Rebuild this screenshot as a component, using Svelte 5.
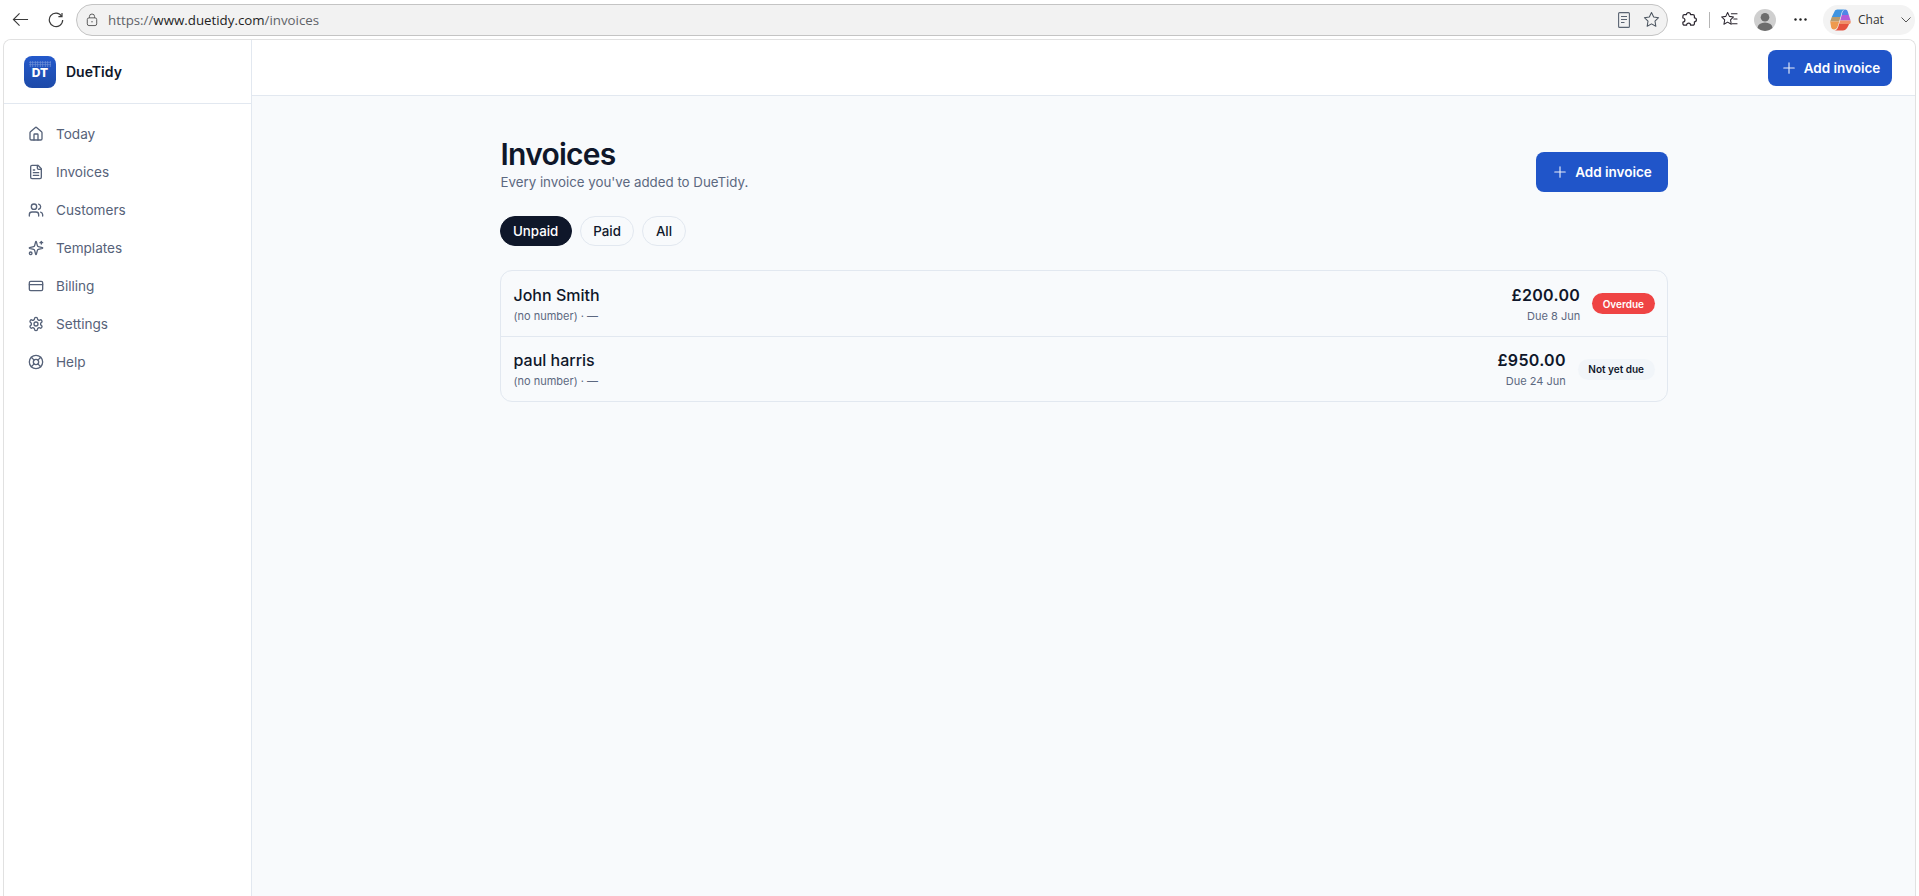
<script lang="ts">
  const circle = (cx: number, cy: number, r: number) =>
    `M${cx - r} ${cy}a${r} ${r} 0 1 0 ${r * 2} 0a${r} ${r} 0 1 0 ${-r * 2} 0`;

  const NAV = [
    {
      label: 'Today',
      paths: [
        'M15 21v-8a1 1 0 0 0-1-1h-4a1 1 0 0 0-1 1v8',
        'M3 10a2 2 0 0 1 .709-1.528l7-5.999a2 2 0 0 1 2.582 0l7 5.999A2 2 0 0 1 21 10v9a2 2 0 0 1-2 2H5a2 2 0 0 1-2-2z'
      ]
    },
    {
      label: 'Invoices',
      paths: [
        'M15 2H6a2 2 0 0 0-2 2v16a2 2 0 0 0 2 2h12a2 2 0 0 0 2-2V7Z',
        'M14 2v4a2 2 0 0 0 2 2h4',
        'M10 9H8',
        'M16 13H8',
        'M16 17H8'
      ]
    },
    {
      label: 'Customers',
      paths: [
        'M16 21v-2a4 4 0 0 0-4-4H6a4 4 0 0 0-4 4v2',
        circle(9, 7, 4),
        'M22 21v-2a4 4 0 0 0-3-3.87',
        'M16 3.13a4 4 0 0 1 0 7.75'
      ]
    },
    {
      label: 'Templates',
      paths: [
        'M9.937 15.5A2 2 0 0 0 8.5 14.063l-6.135-1.582a.5.5 0 0 1 0-.962L8.5 9.936A2 2 0 0 0 9.937 8.5l1.582-6.135a.5.5 0 0 1 .963 0L14.063 8.5A2 2 0 0 0 15.5 9.937l6.135 1.581a.5.5 0 0 1 0 .964L15.5 14.063a2 2 0 0 0-1.437 1.437l-1.582 6.135a.5.5 0 0 1-.963 0z',
        'M20 2v4',
        'M22 4h-4',
        circle(4, 20, 2)
      ]
    },
    {
      label: 'Billing',
      paths: ['M4 5h16a2 2 0 0 1 2 2v10a2 2 0 0 1-2 2H4a2 2 0 0 1-2-2V7a2 2 0 0 1 2-2z', 'M2 10h20']
    },
    {
      label: 'Settings',
      paths: [
        'M12.22 2h-.44a2 2 0 0 0-2 2v.18a2 2 0 0 1-1 1.73l-.43.25a2 2 0 0 1-2 0l-.15-.08a2 2 0 0 0-2.73.73l-.22.38a2 2 0 0 0 .73 2.73l.15.1a2 2 0 0 1 1 1.72v.51a2 2 0 0 1-1 1.74l-.15.09a2 2 0 0 0-.73 2.73l.22.38a2 2 0 0 0 2.73.73l.15-.08a2 2 0 0 1 2 0l.43.25a2 2 0 0 1 1 1.73V20a2 2 0 0 0 2 2h.44a2 2 0 0 0 2-2v-.18a2 2 0 0 1 1-1.73l.43-.25a2 2 0 0 1 2 0l.15.08a2 2 0 0 0 2.73-.73l.22-.39a2 2 0 0 0-.73-2.73l-.15-.08a2 2 0 0 1-1-1.74v-.5a2 2 0 0 1 1-1.74l.15-.09a2 2 0 0 0 .73-2.73l-.22-.38a2 2 0 0 0-2.73-.73l-.15.08a2 2 0 0 1-2 0l-.43-.25a2 2 0 0 1-1-1.73V4a2 2 0 0 0-2-2z',
        circle(12, 12, 3)
      ]
    },
    {
      label: 'Help',
      paths: [
        circle(12, 12, 10),
        'm4.93 4.93 4.24 4.24',
        'm14.83 9.17 4.24-4.24',
        'm14.83 14.83 4.24 4.24',
        'm9.17 14.83-4.24 4.24',
        circle(12, 12, 4)
      ]
    }
  ];

  const INVOICES = [
    { name: 'John Smith', amount: '£200.00', due: 'Due 8 Jun', status: 'Overdue', overdue: true },
    { name: 'paul harris', amount: '£950.00', due: 'Due 24 Jun', status: 'Not yet due', overdue: false }
  ];

  const FILTERS = ['Unpaid', 'Paid', 'All'];
</script>

{#snippet plus()}
  <svg class="plus" viewBox="0 0 24 24" fill="none" stroke="currentColor" stroke-width="1.5" stroke-linecap="round">
    <path d="M5 12h14M12 5v14" />
  </svg>
{/snippet}

<div class="window">
  <div class="chrome">
    <svg class="c-back" viewBox="0 0 18 18" fill="none" stroke="#3b3b3b" stroke-width="1.2">
      <path d="M17 9H1.500M8 2.500 1.500 9 8 15.500" />
    </svg>
    <svg class="c-reload" viewBox="0 0 16 16" fill="none" stroke="#3b3b3b" stroke-width="1.2">
      <path d="M13.600 4.200A6.700 6.700 0 1 0 14.700 8" />
      <path d="M14 1v3.600h-3.600" />
    </svg>
    <div class="urlbar">
      <svg class="c-lock" viewBox="0 0 14 16" fill="none" stroke="#555" stroke-width="1.1">
        <rect x="1.500" y="5.500" width="11" height="9" rx="2" />
        <path d="M4 5.500V4a3 3 0 0 1 6 0v1.500" />
        <circle cx="7" cy="10" r=".8" fill="#555" stroke="none" />
      </svg>
      <span class="url"><span class="dim">https://</span>www.duetidy.com<span class="dim">/invoices</span></span>
      <svg class="c-reader" viewBox="0 0 12 16" fill="none" stroke="#5a6472" stroke-width="1.1">
        <rect x=".6" y=".6" width="10.800" height="14.800" rx="1" />
        <path d="M3 4.500h6M3 7.500h6M3 10.500h3.500" />
      </svg>
      <svg class="c-star" viewBox="0 0 18 18" fill="none" stroke="#4c5560" stroke-width="1.1" stroke-linejoin="round">
        <path d="m9 1.500 2.300 4.900 5.200.7-3.800 3.700.9 5.400L9 13.600l-4.600 2.600.9-5.400-3.800-3.700 5.200-.7z" />
      </svg>
    </div>
    <svg class="c-puzzle" viewBox="0 0 16 16" fill="none" stroke="#2c2730" stroke-width="1.2" stroke-linejoin="round">
      <path d="M5.500 2.600a2 2 0 0 1 4 0h2.400a1.500 1.500 0 0 1 1.500 1.500v1.700a2 2 0 0 1 0 4v1.900a1.500 1.500 0 0 1-1.500 1.500H9.600a2 2 0 0 0-4 0H3.400a1.500 1.500 0 0 1-1.500-1.500V10a2 2 0 0 0 0-4V4.100a1.500 1.500 0 0 1 1.500-1.500z" />
    </svg>
    <span class="c-sep"></span>
    <svg class="c-favs" viewBox="0 0 18 18" fill="none" stroke="#2c2730" stroke-width="1.1" stroke-linejoin="round">
      <path d="m7 1.500 1.900 4.200 4.400.6-3.200 3.100.8 4.600L7 11.800l-3.900 2.200.8-4.600L.7 6.300l4.400-.6z" />
      <path d="M11 3h6M13.500 8.500H17M12 13.500h5" stroke-linecap="round" />
    </svg>
    <svg class="c-avatar" viewBox="0 0 22 22">
      <circle cx="11" cy="11" r="11" fill="#cfcfcf" />
      <circle cx="11" cy="8.300" r="4.300" fill="#6d6d6d" />
      <path d="M3.500 19a7.500 5.500 0 0 1 15 0 11 11 0 0 1-15 0z" fill="#6d6d6d" />
    </svg>
    <svg class="c-dots" viewBox="0 0 13 3" fill="#222">
      <circle cx="1.500" cy="1.500" r="1.200" /><circle cx="6.500" cy="1.500" r="1.200" /><circle cx="11.500" cy="1.500" r="1.200" />
    </svg>
    <div class="chat">
      <svg class="c-copilot" viewBox="0 0 22 22">
        <path d="M6 1.500C6.800.7 8 .5 9 .5h7c-2 .4-3 1.800-3.500 3.500L11.500 8H2.800z" fill="#3f94e0" />
        <path d="M2.800 8h8.700l-1.300 4.500H1.200z" fill="#b89a6c" />
        <path d="M1.200 12.500h9l-1.300 4.300c-.7 2.500-2 3.700-3.900 3.700-1.500 0-2.300-.8-2.800-2z" fill="#ee9a4e" />
        <path d="M16 .5c1.500 0 2.300.8 2.800 2.200l1 3.300h-7.100l.3-1.500c.5-2 1.700-3.700 3-4z" fill="#4f86e6" />
        <path d="M12.700 6h7.100l1.700 5.500H11.200z" fill="#b35bd6" />
        <path d="M11.200 11.500h10.300c.6 1.800.1 3.500-1.500 3.500H10z" fill="#f0906a" />
        <path d="M10 15h10c-1.200 3-3 6.500-6 6.500H5.500c2.300 0 3.600-2.300 4.500-6.500z" fill="#e5533f" />
      </svg>
      <span>Chat</span>
      <svg class="c-chev" viewBox="0 0 10 6" fill="none" stroke="#555" stroke-width="1">
        <path d="m.5.5 4.500 4.500L9.500.5" />
      </svg>
    </div>
  </div>

  <div class="app">
    <aside class="sidebar">
      <div class="brand">
        <div class="logo"><span>DT</span></div>
        <span class="brand-name">DueTidy</span>
      </div>
      <nav class="nav">
        {#each NAV as item}
          <div class="nav-item">
            <svg viewBox="0 0 24 24" fill="none" stroke="currentColor" stroke-width="2" stroke-linecap="round" stroke-linejoin="round">
              {#each item.paths as d}
                <path {d} />
              {/each}
            </svg>
            <span>{item.label}</span>
          </div>
        {/each}
      </nav>
    </aside>

    <div class="main">
      <header class="topbar">
        <button class="btn btn-sm">{@render plus()}Add invoice</button>
      </header>
      <main class="content">
        <div class="page-head">
          <div class="titles">
            <h1>Invoices</h1>
            <p>Every invoice you've added to DueTidy.</p>
          </div>
          <button class="btn">{@render plus()}Add invoice</button>
        </div>

        <div class="filters">
          {#each FILTERS as f, i}
            <span class="pill" class:active={i === 0}>{f}</span>
          {/each}
        </div>

        <div class="card">
          {#each INVOICES as inv}
            <div class="row">
              <div class="who">
                <div class="name">{inv.name}</div>
                <div class="meta">(no number) · —</div>
              </div>
              <div class="money">
                <div class="amount">{inv.amount}</div>
                <div class="due">{inv.due}</div>
              </div>
              <span class="badge" class:overdue={inv.overdue}>{inv.status}</span>
            </div>
          {/each}
        </div>
      </main>
    </div>
  </div>
</div>

<style>
  :global(body) {
    margin: 0;
    background: #fff;
    font-family: Inter, 'Liberation Sans', sans-serif;
    overflow: hidden;
  }
  .window {
    width: 1919px;
    height: 896px;
    display: flex;
    flex-direction: column;
    background: #fff;
  }

  /* ---------- browser bar ---------- */
  .chrome {
    height: 39px;
    flex: none;
    display: flex;
    align-items: center;
    box-sizing: border-box;
    padding-left: 12px;
  }
  .c-back { width: 17px; height: 17px; flex: none; }
  .c-reload { width: 16px; height: 16px; margin-left: 19px; flex: none; }
  .urlbar {
    width: 1592px;
    height: 32px;
    margin-left: 12px;
    box-sizing: border-box;
    border: 1px solid #c4c4c4;
    border-radius: 16px;
    background: #f2f2f2;
    display: flex;
    align-items: center;
    padding-left: 9px;
    flex: none;
  }
  .c-lock { width: 12px; height: 14px; flex: none; }
  .url {
    margin-left: 10px;
    font-family: 'Open Sans', sans-serif;
    font-size: 13.3px;
    color: #1f1f1f;
    flex: 1;
  }
  .dim { color: #5f6368; }
  .c-reader { width: 12px; height: 16px; flex: none; }
  .c-star { width: 17px; height: 17px; margin-left: 13px; margin-right: 7px; flex: none; }
  .c-puzzle { width: 16px; height: 16px; margin-left: 13px; flex: none; }
  .c-sep { width: 1px; height: 16px; background: #b5b5b5; margin-left: 12px; flex: none; }
  .c-favs { width: 17px; height: 17px; margin-left: 11px; flex: none; }
  .c-avatar { width: 22px; height: 22px; margin-left: 16px; flex: none; }
  .c-dots { width: 13px; height: 3px; margin-left: 18px; flex: none; }
  .chat {
    width: 92px;
    height: 30px;
    margin-left: 16px;
    box-sizing: border-box;
    padding-left: 6px;
    border-radius: 15px;
    background: #f3f3f3;
    display: flex;
    align-items: center;
    font-family: 'Open Sans', sans-serif;
    font-size: 12px;
    color: #333;
    flex: none;
  }
  .c-copilot { width: 22px; height: 22px; margin-right: 7px; flex: none; }
  .c-chev { width: 10px; height: 6px; margin-left: 17px; flex: none; }

  /* ---------- app frame ---------- */
  .app {
    flex: 1;
    min-height: 0;
    display: flex;
    margin-left: 3px;
    margin-right: 3px;
    border: 1px solid #e1e1e1;
    border-bottom: none;
    border-radius: 8px 8px 0 0;
    overflow: hidden;
    background: #f8fafc;
  }
  .sidebar {
    width: 248px;
    flex: none;
    box-sizing: border-box;
    background: #fff;
    border-right: 1px solid #e2e8f0;
  }
  .brand {
    height: 64px;
    box-sizing: border-box;
    border-bottom: 1px solid #e2e8f0;
    display: flex;
    align-items: center;
    padding-left: 20px;
    gap: 10px;
  }
  .logo {
    width: 32px;
    height: 32px;
    border-radius: 8px;
    background: linear-gradient(180deg, #2459cb, #1d4aa8);
    color: #fff;
    font-weight: 800;
    font-size: 12px;
    display: flex;
    align-items: center;
    justify-content: center;
    position: relative;
  }
  .logo span { margin-top: 2px; }
  .logo::before {
    content: '';
    position: absolute;
    left: 5px;
    right: 5px;
    top: 5px;
    height: 6px;
    background-image: radial-gradient(circle, rgba(255, 255, 255, 0.35) 0.8px, transparent 1px);
    background-size: 2.5px 2.5px;
  }
  .brand-name {
    font-size: 14px;
    font-weight: 600;
    color: #0f172a;
  }
  .nav {
    padding-top: 11px;
    display: flex;
    flex-direction: column;
  }
  .nav-item {
    height: 38px;
    display: flex;
    align-items: center;
    padding-left: 24px;
    gap: 12px;
    font-size: 13.6px;
    color: #566279;
  }
  .nav-item svg { width: 16px; height: 16px; flex: none; }

  .main {
    flex: 1;
    min-width: 0;
    display: flex;
    flex-direction: column;
  }
  .topbar {
    height: 56px;
    flex: none;
    box-sizing: border-box;
    background: #fff;
    border-bottom: 1px solid #e2e8f0;
    display: flex;
    align-items: center;
    justify-content: flex-end;
    padding-right: 23px;
  }
  .btn {
    display: inline-flex;
    align-items: center;
    justify-content: center;
    gap: 6px;
    border: none;
    background: #2055c9;
    color: #fff;
    font: 600 13.5px Inter, sans-serif;
    width: 132px;
    height: 40px;
    border-radius: 8px;
    padding: 0;
    flex: none;
  }
  .btn-sm { width: 124px; height: 36px; }
  .plus { width: 18px; height: 18px; flex: none; opacity: 0.9; }

  .content {
    width: 1168px;
    margin: 0 auto;
    padding-top: 43px;
  }
  .page-head {
    display: flex;
    justify-content: space-between;
    align-items: flex-start;
    height: 57px;
  }
  .page-head .btn { margin-top: 13px; }
  .titles { padding-left: 1px; }
  h1 {
    margin: 0;
    font-size: 30px;
    line-height: 30px;
    font-weight: 600;
    color: #0f172a;
    letter-spacing: -0.75px;
  }
  .page-head p {
    margin: 4px 0 0;
    font-size: 13.3px;
    line-height: 18px;
    color: #5c6880;
  }
  .filters {
    display: flex;
    gap: 8px;
    margin-top: 20px;
  }
  .pill {
    height: 30px;
    box-sizing: border-box;
    display: flex;
    align-items: center;
    padding: 0 12.500px;
    border: 1px solid #e2e8f0;
    border-radius: 15px;
    font-size: 13.3px;
    font-weight: 450;
    color: #0f172a;
  }
  .pill.active {
    background: #0f172a;
    border-color: #0f172a;
    color: #fff;
  }
  .card {
    margin-top: 24px;
    border: 1px solid #e2e8f0;
    border-radius: 12px;
  }
  .row {
    height: 65px;
    box-sizing: border-box;
    display: flex;
    align-items: center;
    padding: 0 12px 0 13px;
  }
  .row + .row { border-top: 1px solid #e2e8f0; }
  .who { flex: 1; }
  .name {
    font-size: 16px;
    font-weight: 450;
    line-height: 20px;
    color: #0f172a;
  }
  .meta {
    margin-top: 4px;
    font-size: 11px;
    line-height: 14px;
    color: #5c6880;
  }
  .money { text-align: right; margin-right: 12px; }
  .amount {
    font-size: 16px;
    font-weight: 600;
    line-height: 20px;
    color: #0f172a;
    letter-spacing: 0.3px;
  }
  .due {
    margin-top: 4px;
    font-size: 11px;
    line-height: 14px;
    color: #5c6880;
  }
  .badge {
    height: 21px;
    display: flex;
    align-items: center;
    padding: 0 10.500px;
    border-radius: 11px;
    font-size: 10px;
    font-weight: 600;
    background: #f1f5f9;
    color: #0f172a;
  }
  .badge.overdue {
    background: #ef4444;
    color: #fff;
  }
</style>
